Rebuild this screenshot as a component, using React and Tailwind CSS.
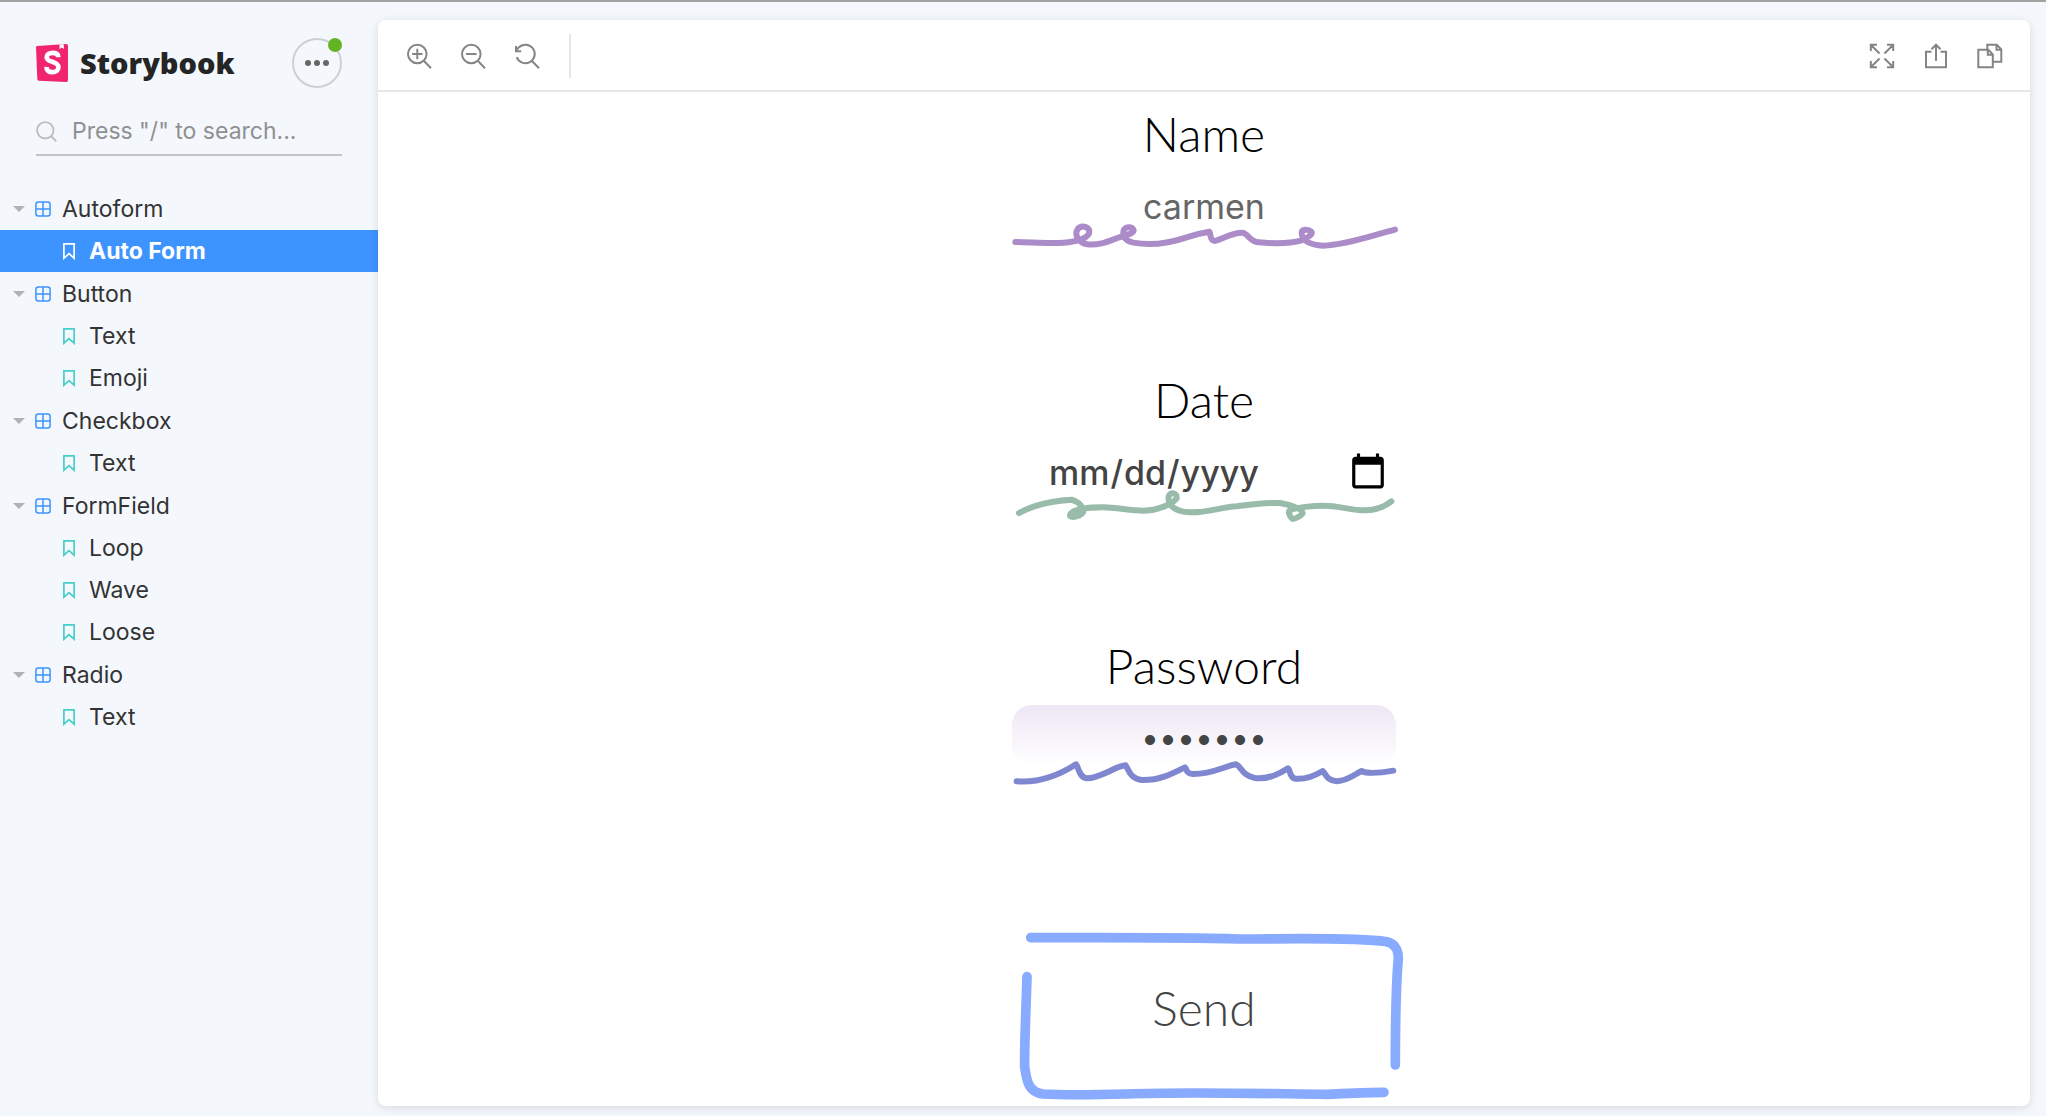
import React from "react";

const TREE = [
  { name: "Autoform", stories: ["Auto Form"] },
  { name: "Button", stories: ["Text", "Emoji"] },
  { name: "Checkbox", stories: ["Text"] },
  { name: "FormField", stories: ["Loop", "Wave", "Loose"] },
  { name: "Radio", stories: ["Text"] },
];

function StorybookLogo() {
  return (
    <a href="#home" className="flex items-center gap-3 text-[#252525]">
      <svg viewBox="0 0 32 38" className="h-[38px] w-8" aria-hidden="true">
        <path d="M1.3 1.9 30.2 0Q32 0 32 1.800V36.200Q32 38 30.200 37.900L3 36.700Q1.400 36.600 1.300 35L0 3.300Q0 2 1.300 1.900Z" fill="#f1246f" />
        <path d="M23.500 .5 27.700 .2 27.900 5 25.800 3.500 23.600 4.900Z" fill="#fff" />
        <path
          d="M22.300 13.300C22.300 9.900 20 8.800 16.700 8.800C13.200 8.800 10.700 10.300 10.700 13.200C10.700 19.200 22.400 16.500 22.400 23.300C22.400 26.500 19.800 28.200 16.500 28.200C12.700 28.200 10.300 26.500 10.500 22.800"
          fill="none" stroke="#fff" strokeWidth="4.700"
        />
      </svg>
      <span className="font-['Open_Sans'] text-[29px] leading-9 font-extrabold">Storybook</span>
    </a>
  );
}

function ComponentIcon() {
  return (
    <svg viewBox="0 0 16 16" className="h-4 w-4 shrink-0" fill="none" stroke="#3d94ff" strokeWidth="1.500" aria-hidden="true">
      <rect x=".9" y=".9" width="14.200" height="14.200" rx="2.500" />
      <path d="M8 1v14M1 8h14" />
    </svg>
  );
}

function BookmarkIcon({ selected }) {
  return (
    <svg viewBox="0 0 12 17" className="h-[17px] w-3 shrink-0" fill="none" stroke={selected ? "#ffffff" : "#45cfc9"} strokeWidth="1.700" aria-hidden="true">
      <path d="M.9.9h10.200v14.300L6 10.700.9 15.200z" />
    </svg>
  );
}

function Group({ group, first }) {
  return (
    <li>
      <button type="button" aria-expanded="true" className="flex h-[42px] w-full items-center pl-[13px] text-left">
        <svg viewBox="0 0 12 6" className="h-[6px] w-3" aria-hidden="true">
          <path d="M0 0h12L6 6z" fill="#b0b2b4" />
        </svg>
        <span className="ml-[10px] flex"><ComponentIcon /></span>
        <span className="ml-[11px]">{group.name}</span>
      </button>
      <ul>
        {group.stories.map((s) => (
          <li key={s}>
            <a
              href={"#" + group.name + "-" + s}
              className={
                first
                  ? "flex h-[42px] items-center gap-[14px] bg-[#3d94ff] pl-[63px] font-bold text-white"
                  : "flex h-[42px] items-center gap-[14px] pl-[63px]"
              }
            >
              <BookmarkIcon selected={first} />
              {s}
            </a>
          </li>
        ))}
      </ul>
    </li>
  );
}

function Sidebar() {
  return (
    <nav className="w-[378px] shrink-0 pt-9 text-[23px] leading-7 text-[#333333]">
      <div className="flex h-[50px] items-center justify-between pr-9 pl-9">
        <StorybookLogo />
        <button type="button" aria-label="Shortcuts" className="relative flex h-[50px] w-[50px] items-center justify-center gap-[3px] rounded-full border-2 border-[#cdd0d3]">
          <span className="h-[6px] w-[6px] rounded-full bg-[#666666]" />
          <span className="h-[6px] w-[6px] rounded-full bg-[#666666]" />
          <span className="h-[6px] w-[6px] rounded-full bg-[#666666]" />
          <span className="absolute -top-[2px] -right-[2px] h-[14px] w-[14px] rounded-full bg-[#62b425]" />
        </button>
      </div>
      <label className="mx-9 mt-5 flex h-12 items-center gap-[15px] border-b-2 border-[#c0c3c7]">
        <svg viewBox="0 0 21 21" className="h-[21px] w-[21px] shrink-0" fill="none" stroke="#bbbdbf" strokeWidth="1.800" aria-hidden="true">
          <circle cx="9.300" cy="9.300" r="8.200" />
          <path d="m15 15 5.300 5.300" />
        </svg>
        <input
          type="search"
          aria-label="Search"
          placeholder={'Press "/" to search...'}
          className="w-full min-w-0 bg-transparent outline-none placeholder:text-[#8e9091]"
        />
      </label>
      <ul className="mt-8 flex flex-col gap-px">
        {TREE.map((g, i) => (
          <Group key={g.name} group={g} first={i === 0} />
        ))}
      </ul>
    </nav>
  );
}

function ToolIcon({ label, children }) {
  return (
    <button type="button" aria-label={label}>
      <svg viewBox="0 0 26 26" className="h-[26px] w-[26px]" fill="none" stroke="#858585" strokeWidth="2" aria-hidden="true">
        {children}
      </svg>
    </button>
  );
}

function Toolbar() {
  return (
    <div className="flex h-[72px] items-center justify-between border-b-2 border-[#e6e6e6] pt-[2px] pr-[27px] pl-[29px]">
      <div className="flex items-center gap-7">
        <ToolIcon label="Zoom in">
          <circle cx="10.300" cy="11" r="9.300" />
          <path d="M10.300 5.800v10.400M5.100 11h10.400M17 18l7 7.300" />
        </ToolIcon>
        <ToolIcon label="Zoom out">
          <circle cx="10.300" cy="11" r="9.300" />
          <path d="M5.100 11h10.400M17 18l7 7.300" />
        </ToolIcon>
        <ToolIcon label="Reset zoom">
          <path d="M1.700 14.200A9.300 9.300 0 1 0 3.700 4.500L1.200 7M1 3v5.200h5.200M17 18l7 7.300" />
        </ToolIcon>
        <span className="h-11 w-[2px] bg-[#e6e6e6]" />
      </div>
      <div className="flex items-center gap-7">
        <ToolIcon label="Go full screen">
          <path d="M1.800 8V1.800H8M18 1.800h6.200V8M24.200 18v6.200H18M8 24.200H1.800V18M2 2l8.500 8.500M24 2l-8.500 8.500M24 24l-8.500-8.500M2 24l8.500-8.500" />
        </ToolIcon>
        <ToolIcon label="Open canvas in new tab">
          <path d="M8.500 8.800H3v15.400h20V8.800h-5.500M13 18V2M8.500 6.200 13 1.700l4.500 4.500" />
        </ToolIcon>
        <ToolIcon label="Copy canvas link">
          <path d="M1.300 6.800h10l4.500 4.500v12.900H1.300zM10.800 7v4.800h5M10.300 6.500V1.800h9.500l4.500 4.500v12.400h-8.500M19.500 2v4.800h4.700" />
        </ToolIcon>
      </div>
    </div>
  );
}

function Field({ label, id, underline, children }) {
  return (
    <div className="flex w-96 flex-col">
      <label htmlFor={id} className="text-center font-['Lato'] text-5xl leading-[60px] font-light text-black">
        {label}
      </label>
      <div className="mt-[9px]">{children}</div>
      <svg viewBox={underline.viewBox} className="pointer-events-none relative -mt-3 h-9 w-96 overflow-visible" fill="none" stroke={underline.color} strokeWidth="18" strokeLinecap="round" strokeLinejoin="round" aria-hidden="true">
        <path d={underline.path} />
      </svg>
    </div>
  );
}

const LOOP = {
  viewBox: "36 366 1152 108",
  color: "#ab8bc8",
  path: "M46 429C100 430 150 434 190 431C235 428 268 415 268 398C268 380 240 378 232 392C222 410 238 432 262 436C310 440 335 420 375 410C392 404 404 400 400 392C396 382 378 382 372 392C366 408 372 425 400 431C460 442 510 432 560 415C590 405 615 400 628 398C634 408 628 425 645 426C670 418 700 400 728 401C745 405 750 428 775 430C820 434 870 434 905 424C925 415 940 405 934 398C925 390 905 390 905 402C905 425 930 438 970 440C1040 438 1120 408 1185 392",
};

const LOOSE = {
  viewBox: "36 354 1152 108",
  color: "#98bbaa",
  path: "M57 432C100 408 160 395 215 392C240 400 255 420 248 432C235 445 210 448 210 438C215 422 260 415 310 415C350 415 390 425 430 425C470 425 520 405 530 388C532 370 512 368 506 382C502 405 520 428 570 430C620 432 660 415 710 412C760 405 800 400 840 402C870 408 905 418 908 432C905 440 885 450 878 450C870 445 862 428 870 424C890 415 940 410 970 410C1020 410 1050 424 1095 424C1130 424 1155 412 1174 397",
};

const WAVE = {
  viewBox: "36 372 1152 108",
  color: "#7f87d0",
  path: "M50 457C110 462 175 440 228 406C238 420 238 445 260 448C300 448 345 412 377 409C388 425 390 448 425 453C480 455 525 430 555 415C562 420 555 435 580 435C640 435 670 412 708 406C725 412 725 440 765 447C810 452 845 430 864 418C872 425 868 445 885 449C920 452 945 440 968 426C978 435 980 455 1010 457C1045 455 1065 435 1085 426C1100 434 1140 432 1180 425",
};

function AutoForm() {
  return (
    <form className="flex flex-col items-center gap-[113px] pt-3" onSubmit={(e) => e.preventDefault()}>
      <Field label="Name" id="name" underline={LOOP}>
        <input id="name" type="text" placeholder="carmen" className="h-[60px] w-full bg-transparent pt-[6px] text-center text-[34px] outline-none placeholder:text-[#666666]" />
      </Field>
      <Field label="Date" id="date" underline={LOOSE}>
        <input id="date" type="date" className="h-[60px] w-full bg-transparent pt-[6px] pr-[6px] pl-9 text-[34px] font-medium text-[#444444] outline-none [&::-webkit-calendar-picker-indicator]:h-10 [&::-webkit-calendar-picker-indicator]:w-10 [&::-webkit-calendar-picker-indicator]:bg-contain" />
      </Field>
      <Field label="Password" id="password" underline={WAVE}>
        <input id="password" type="password" defaultValue="abcdefg" className="h-[60px] w-full rounded-[20px] bg-linear-to-b from-[#ede6f5] to-white pt-1 text-center text-[32px] text-[#444444] outline-none" />
      </Field>
      <button type="submit" className="relative h-[204px] w-96 pt-2 font-['Lato'] text-5xl font-light text-[#444444]">
        <svg viewBox="36 -39 1152 612" className="absolute inset-0 h-full w-full overflow-visible" fill="none" stroke="#88abff" strokeWidth="29" strokeLinecap="round" strokeLinejoin="round" aria-hidden="true">
          <path d="M92 68C300 68 500 66 720 72C850 72 1060 66 1160 80C1190 86 1198 115 1194 140C1188 220 1186 300 1186 450" />
          <path d="M81 185C78 290 73 380 74 455C80 500 86 532 130 537C200 541 300 539 380 537C550 530 750 535 980 538C1050 535 1100 532 1152 532" />
        </svg>
        Send
      </button>
    </form>
  );
}

export default function App() {
  return (
    <div className="flex h-screen border-t-2 border-[#a3a3a3] bg-[#f4f8fd] font-['Inter',sans-serif]">
      <Sidebar />
      <main className="mt-[18px] mr-4 mb-[10px] flex min-w-0 flex-1 flex-col overflow-hidden rounded-lg bg-white shadow-[0_2px_10px_rgba(0,0,0,0.12)]">
        <Toolbar />
        <AutoForm />
      </main>
    </div>
  );
}
